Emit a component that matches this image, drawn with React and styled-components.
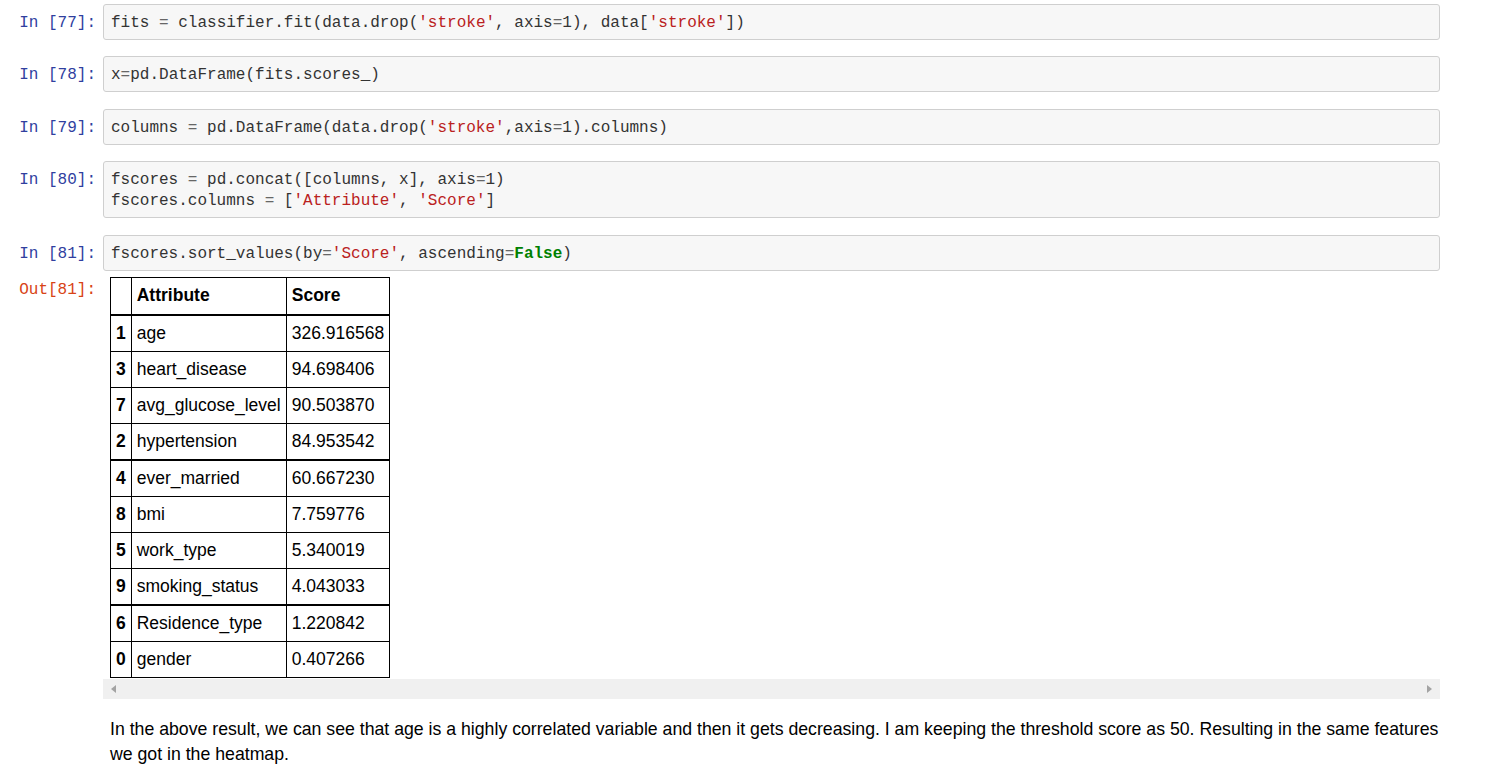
import React from 'react';
import styled, { createGlobalStyle } from 'styled-components';

const GlobalStyle = createGlobalStyle`
  body {
    margin: 0;
    background: #fff;
  }
`;

const mono = `'Liberation Mono', 'DejaVu Sans Mono', monospace`;
const sans = `'Liberation Sans', Arial, sans-serif`;

const Notebook = styled.div`
  display: flex;
  flex-direction: column;
  padding-top: 4px;
`;

const InputCells = styled.div`
  display: flex;
  flex-direction: column;
  gap: 16.4px;
`;

const Cell = styled.div`
  display: flex;
  align-items: flex-start;
`;

const Prompt = styled.div`
  width: 103px;
  box-sizing: border-box;
  padding: ${({ $top }) => $top}px 7px 0 0;
  text-align: right;
  font-family: ${mono};
  font-size: 16px;
  line-height: 21px;
  color: ${({ $out }) => ($out ? '#D84315' : '#303F9F')};
  white-space: pre;
  flex-shrink: 0;
`;

const InputArea = styled.div`
  width: 1337px;
  box-sizing: border-box;
  border: 1px solid #cfcfcf;
  border-radius: 3px;
  background: #f7f7f7;
  padding: 8px 7px 5px;
  font-family: ${mono};
  font-size: 16px;
  line-height: 21px;
  color: #333;
  white-space: pre;
`;

const Str = styled.span`
  color: #ba2121;
`;

const Op = styled.span`
  color: #666;
`;

const Kw = styled.span`
  color: #008000;
  font-weight: bold;
`;

const OutputArea = styled.div`
  width: 1337px;
  display: flex;
  flex-direction: column;
`;

const TableWrap = styled.div`
  padding: 6px 7px 0;
`;

const Table = styled.table`
  border-collapse: collapse;
  border: 1px solid #000;
  font-family: ${sans};
  font-size: 17.5px;
  line-height: 21px;
  color: #000;
`;

const Th = styled.th`
  border: 1px solid #000;
  border-bottom: 2px solid #000;
  padding: 7px 5px 8px;
  text-align: left;
  font-weight: bold;
`;

const Row = styled.tr`
  border-top: ${({ $thick }) => ($thick ? 2 : 1)}px solid #000;
`;

const IndexCell = styled.th`
  border: 1px solid #000;
  border-top: inherit;
  padding: 7px 5px;
  text-align: left;
  font-weight: bold;
`;

const Td = styled.td`
  border: 1px solid #000;
  border-top: inherit;
  padding: 7px 5px;
  text-align: left;
`;

const Scrollbar = styled.div`
  height: 20px;
  margin-top: 1px;
  background: #f0f0f0;
  display: flex;
  align-items: center;
  justify-content: space-between;
  padding: 0 8px;
`;

const Arrow = styled.span`
  width: 0;
  height: 0;
  border-top: 4px solid transparent;
  border-bottom: 4px solid transparent;
  ${({ $dir }) =>
    $dir === 'left' ? 'border-right: 5px solid #a3a3a3;' : 'border-left: 5px solid #a3a3a3;'}
`;

const Markdown = styled.p`
  margin: 18px 0 0 110px;
  width: 1334px;
  font-family: ${sans};
  font-size: 17.7px;
  line-height: 25px;
  color: #000;
`;

const rows = [
  ['1', 'age', '326.916568'],
  ['3', 'heart_disease', '94.698406'],
  ['7', 'avg_glucose_level', '90.503870'],
  ['2', 'hypertension', '84.953542'],
  ['4', 'ever_married', '60.667230', true],
  ['8', 'bmi', '7.759776'],
  ['5', 'work_type', '5.340019'],
  ['9', 'smoking_status', '4.043033'],
  ['6', 'Residence_type', '1.220842', true],
  ['0', 'gender', '0.407266'],
];

const App = () => (
  <>
    <GlobalStyle />
    <Notebook>
      <InputCells>
        <Cell>
          <Prompt $top={9}>In [77]:</Prompt>
          <InputArea>
            fits <Op>=</Op> classifier.fit(data.drop(<Str>'stroke'</Str>, axis<Op>=</Op>1), data[<Str>'stroke'</Str>])
          </InputArea>
        </Cell>
        <Cell>
          <Prompt $top={9}>In [78]:</Prompt>
          <InputArea>
            x<Op>=</Op>pd.DataFrame(fits.scores_)
          </InputArea>
        </Cell>
        <Cell>
          <Prompt $top={9}>In [79]:</Prompt>
          <InputArea>
            columns <Op>=</Op> pd.DataFrame(data.drop(<Str>'stroke'</Str>,axis<Op>=</Op>1).columns)
          </InputArea>
        </Cell>
        <Cell>
          <Prompt $top={9}>In [80]:</Prompt>
          <InputArea>
            fscores <Op>=</Op> pd.concat([columns, x], axis<Op>=</Op>1){'\n'}
            fscores.columns <Op>=</Op> [<Str>'Attribute'</Str>, <Str>'Score'</Str>]
          </InputArea>
        </Cell>
        <Cell>
          <Prompt $top={9}>In [81]:</Prompt>
          <InputArea>
            fscores.sort_values(by<Op>=</Op><Str>'Score'</Str>, ascending<Op>=</Op><Kw>False</Kw>)
          </InputArea>
        </Cell>
      </InputCells>
      <Cell>
        <Prompt $top={9} $out>Out[81]:</Prompt>
        <OutputArea>
          <TableWrap>
            <Table>
              <thead>
                <tr>
                  <Th />
                  <Th>Attribute</Th>
                  <Th>Score</Th>
                </tr>
              </thead>
              <tbody>
                {rows.map(([idx, attr, score, thick]) => (
                  <Row key={idx} $thick={thick}>
                    <IndexCell>{idx}</IndexCell>
                    <Td>{attr}</Td>
                    <Td>{score}</Td>
                  </Row>
                ))}
              </tbody>
            </Table>
          </TableWrap>
          <Scrollbar>
            <Arrow $dir="left" />
            <Arrow $dir="right" />
          </Scrollbar>
        </OutputArea>
      </Cell>
      <Markdown>
        In the above result, we can see that age is a highly correlated variable and then it gets decreasing. I am keeping the threshold score as 50. Resulting in the same features we got in the heatmap.
      </Markdown>
    </Notebook>
  </>
);

export default App;
